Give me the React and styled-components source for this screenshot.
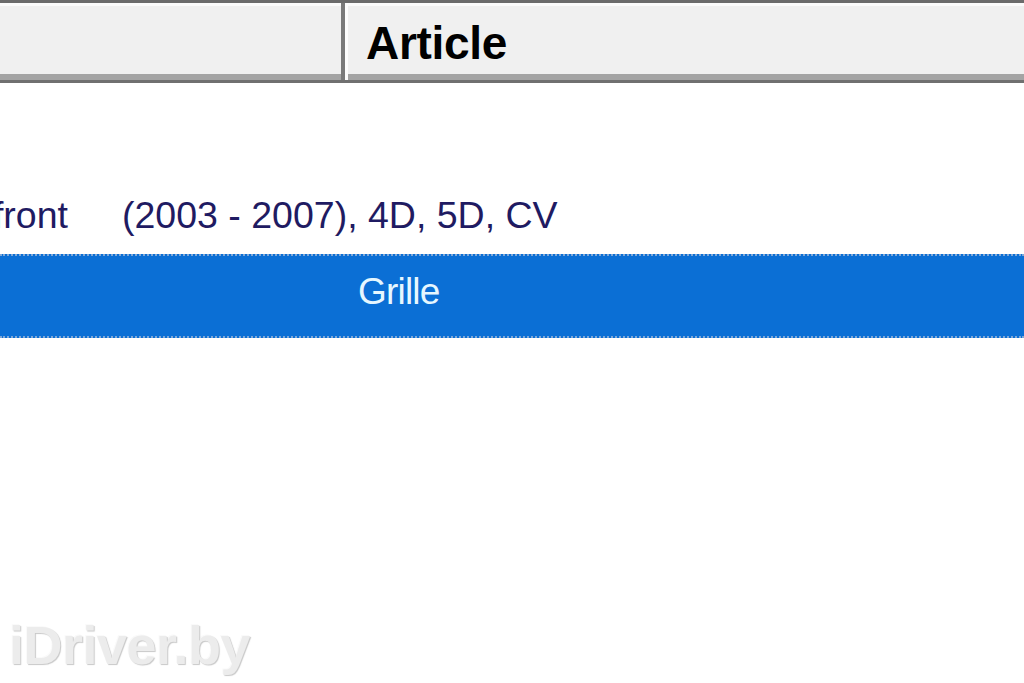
import React from "react";
import styled, { createGlobalStyle } from "styled-components";

const Global = createGlobalStyle`
  html, body { margin: 0; padding: 0; background: #ffffff; }
  body { width: 1024px; height: 683px; overflow: hidden; font-family: "Liberation Sans", Arial, sans-serif; }
  #root { width: 1024px; height: 683px; }
`;

const Screen = styled.div`
  position: relative;
  width: 1024px;
  height: 683px;
  display: flex;
  flex-direction: column;
  background: #ffffff;
  overflow: hidden;
`;

const Header = styled.div`
  display: flex;
  height: 83px;
  box-sizing: border-box;
  border-top: 3px solid #6b6b6b;
  border-bottom: 3px solid #707070;
  background: #f0f0f0;
  box-shadow: inset 0 3px 0 #fbfbfb, inset 0 -6px 0 #a4a4a4;
`;

const HeaderCell = styled.div`
  display: flex;
  align-items: center;
  box-sizing: border-box;
  width: ${(p) => (p.$w ? `${p.$w}px` : "auto")};
  flex: ${(p) => (p.$w ? "none" : "1")};
  padding-left: ${(p) => p.$pad || 0}px;
  padding-top: 2px;
  border-right: ${(p) => (p.$sep ? "4px solid #7a7a7a" : "none")};
  border-left: ${(p) => (p.$hl ? "3px solid #fdfdfd" : "none")};
  font-weight: bold;
  font-size: 46px;
  color: #000;
  letter-spacing: -0.3px;
`;

const Body = styled.div`
  display: flex;
  flex-direction: column;
  padding-top: 87px;
`;

const Row = styled.div`
  display: flex;
  align-items: center;
  height: 84px;
  box-sizing: border-box;
  background: ${(p) => (p.$selected ? "#0b6fd5" : "#ffffff")};
  border-top: ${(p) => (p.$selected ? "2px dotted #7fa8d8" : "none")};
  border-bottom: ${(p) => (p.$selected ? "2px dotted #7fa8d8" : "none")};
  font-size: ${(p) => (p.$selected ? "37px" : "37.5px")};
  letter-spacing: ${(p) => (p.$selected ? "-0.8px" : "0")};
  color: ${(p) => (p.$selected ? "#e6f7ff" : "#1f1b62")};
  white-space: nowrap;
`;

const Cell = styled.div`
  display: flex;
  justify-content: ${(p) => (p.$right ? "flex-end" : "flex-start")};
  width: ${(p) => (p.$w ? `${p.$w}px` : "auto")};
  flex: none;
  margin-left: ${(p) => p.$ml || 0}px;
  padding-top: ${(p) => p.$pt || 0}px;
  padding-bottom: ${(p) => p.$pb || 0}px;
`;

const Watermark = styled.div`
  position: absolute;
  left: 9px;
  top: 614px;
  font-family: "Liberation Sans", Arial, sans-serif;
  font-weight: bold;
  font-size: 54px;
  letter-spacing: -0.5px;
  color: #ececec;
  text-shadow: 1px 1px 1px #c8c8c8, -1px -1px 0 #fafafa;
`;

export default function App() {
  return (
    <>
      <Global />
      <Screen>
        <Header>
          <HeaderCell $w={345} $sep />
          <HeaderCell $hl $pad={18}>Article</HeaderCell>
        </Header>
        <Body>
          <Row>
            <Cell $w={68} $right $pt={6}>front</Cell>
            <Cell $ml={54} $pt={6}>(2003 - 2007), 4D, 5D, CV</Cell>
          </Row>
          <Row $selected>
            <Cell $ml={358} $pb={8}>Grille</Cell>
          </Row>
        </Body>
        <Watermark>iDriver.by</Watermark>
      </Screen>
    </>
  );
}
